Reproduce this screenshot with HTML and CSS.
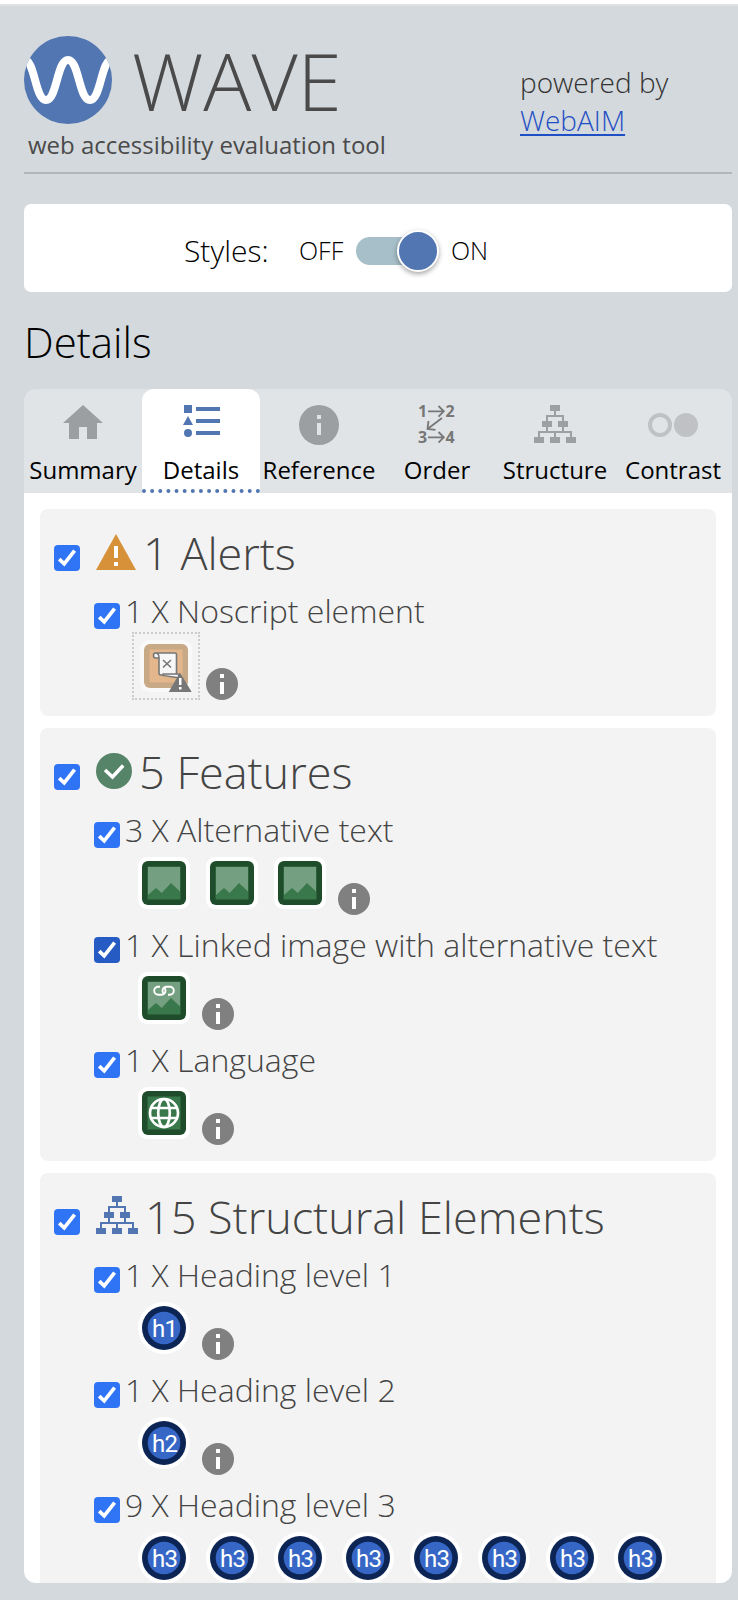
FILE: index.html
```html
<!DOCTYPE html>
<html lang="en">
<head>
<meta charset="utf-8">
<title>WAVE</title>
<link rel="stylesheet" href="styles.css">
</head>
<body>
<svg class="defs" aria-hidden="true">
  <symbol id="tree" viewBox="0 0 42 38"><path d="M16 0h10v6h-4v4h8v6h4v6h-4v4h8v6h4v6H32v-6h4v-4H22v4h4v6H16v-6h4v-4H6v4h4v6H0v-6h4v-6h8v-4H8v-6h4v-6h8V6h-4zM14 12v4h4v6h-4v4h14v-4h-4v-6h4v-4z" fill-rule="evenodd"/></symbol>
  <symbol id="check" viewBox="0 0 26 26"><rect width="26" height="26" rx="4"/><path d="M5.2 14.2l5 4.6L20.6 5.6" fill="none" stroke="#fff" stroke-width="3.7"/></symbol>
  <symbol id="info" viewBox="0 0 32 32"><circle cx="16" cy="16" r="16" fill="#808080"/><path d="M14 6h4v4h-4zM14 14h4v12h-4z" fill="#fff"/></symbol>
  <symbol id="green" viewBox="0 0 52 52"><rect width="52" height="52" rx="9" fill="#fff"/><rect x="4" y="4" width="44" height="44" rx="6" fill="#1f4d2b"/><rect x="9.5" y="9.5" width="33" height="33" fill="#38784a"/></symbol>
  <symbol id="image" viewBox="0 0 52 52"><use href="#green"/><path d="M10 10h32v24.5L33 26l-9.3 10-5.7-5-8 7z" fill="#749f80"/></symbol>
  <symbol id="disc" viewBox="0 0 52 52"><circle cx="26" cy="26" r="26" fill="#fff"/><circle cx="26" cy="26" r="22" fill="#0c2554"/><circle cx="26" cy="26" r="16.3" fill="#3767c6"/></symbol>
</svg>
<div class="frame">
  <header class="header">
    <div class="brand">
      <div class="brand-row">
        <svg class="logo" viewBox="0 0 88 88"><clipPath id="c"><circle cx="44" cy="44" r="44"/></clipPath><g clip-path="url(#c)"><rect width="88" height="88" fill="#5276b1"/><path d="M0 23.500C11 23.500 11 64 22 64S33 24 44 24 55 64 66 64 77 23.500 88 23.500" fill="none" stroke="#fff" stroke-width="8"/></g></svg>
        <span class="wordmark">WAVE</span>
      </div>
      <div class="tagline">web accessibility evaluation tool</div>
    </div>
    <div class="powered">powered by<br><a href="#">WebAIM</a></div>
  </header>
  <div class="styles-bar">
    <span class="styles-label">Styles:</span><span class="off">OFF</span><span class="switch"><span class="knob"></span></span><span class="on">ON</span>
  </div>
  <h1 class="title">Details</h1>
  <nav class="tabs">
    <div class="tab"><svg width="40" height="34" viewBox="0 0 40 34"><path d="M20 0l20 18h-6v16H24V22h-8v12H6V18H0z" fill="#9b9fa2"/></svg><span>Summary</span></div>
    <div class="tab active"><svg width="37" height="32" viewBox="0 0 37 32" fill="#5276b1"><path d="M1 0h8v8H1zM5 11l5 9H0zM13 2h24v4H13zM13 14h24v4H13zM13 26h24v4H13z"/><circle cx="5" cy="28" r="4"/></svg><span>Details</span></div>
    <div class="tab"><svg width="40" height="40" viewBox="0 0 40 40"><circle cx="20" cy="20" r="20" fill="#9b9fa2"/><path d="M18 10h4v4h-4zM18 18h4v12h-4z" fill="#e0e4e7"/></svg><span>Reference</span></div>
    <div class="tab"><svg width="38" height="38" viewBox="0 0 38 38"><g class="order-num"><text x="0" y="11.500">1</text><text x="27.500" y="11.500">2</text><text x="0" y="37.500">3</text><text x="27.500" y="37.500">4</text></g><path d="M10 6.300h16M20.500 1l5.300 5.300-5.300 5.300M10 32.300h16M20.500 27l5.300 5.300-5.300 5.300M24 13L9.500 24M10.500 16L9.500 24l8 .8" fill="none" stroke="#777" stroke-width="1.800"/></svg><span>Order</span></div>
    <div class="tab"><svg width="42" height="38" fill="#9e9fa1"><use href="#tree"/></svg><span>Structure</span></div>
    <div class="tab"><svg width="50" height="40" viewBox="0 0 50 40"><circle cx="12" cy="20" r="10" fill="none" stroke="#bfc1c4" stroke-width="4"/><circle cx="38" cy="20" r="12" fill="#bfc1c4"/></svg><span>Contrast</span></div>
  </nav>
  <main class="panel">
    <section class="card alerts">
      <h2 class="head"><svg class="box"><use href="#check"/></svg><svg class="hicon" width="40" height="36" viewBox="0 0 40 36"><path d="M20 0l20 36H0z" fill="#d69139"/><path d="M18 12h4v12h-4zM18 28h4v4h-4z" fill="#fff"/></svg><span>1 Alerts</span></h2>
      <div class="row">
        <h3 class="label"><svg class="box"><use href="#check"/></svg><span>1 X Noscript element</span></h3>
        <div class="icons"><span class="outlined"><svg class="tile" viewBox="0 0 52 52"><rect width="52" height="52" rx="9" fill="#f9f9f9"/><rect x="4" y="4" width="44" height="44" rx="6" fill="#c8a985"/><rect x="9.500" y="9.500" width="33" height="33" fill="#e3b68b"/><path d="M14.500 13H35q1.500 0 1.500 1.500V34q0 1.200-1.500 1.200L21 35q-2 0-2-2V18h-3.500q-2 0-2-2.500T15.500 13q3.500 0 3.500 5" fill="#f7f7f7" stroke="#777" stroke-width="1.600"/><path d="M23 34h15l2 4-17-2.500z" fill="#f7f7f7" stroke="#777" stroke-width="1.400"/><path d="M23 20l8 7.500M31 20l-8 7.500" stroke="#777" stroke-width="1.600"/><path d="M40 32.500L51.700 52h-23z" fill="#777"/><path d="M39 38h2.500v7H39zM39 47h2.500v2.500H39z" fill="#fff"/></svg></span><svg class="info"><use href="#info"/></svg></div>
      </div>
    </section>
    <section class="card">
      <h2 class="head"><svg class="box"><use href="#check"/></svg><svg class="hicon" width="36" height="36" viewBox="0 0 36 36"><circle cx="18" cy="18" r="18" fill="#558468"/><path d="M9 17l7.500 7L27.200 12.500" fill="none" stroke="#fff" stroke-width="3.500"/></svg><span>5 Features</span></h2>
      <div class="row">
        <h3 class="label"><svg class="box"><use href="#check"/></svg><span>3 X Alternative text</span></h3>
        <div class="icons"><svg class="tile"><use href="#image"/></svg><svg class="tile"><use href="#image"/></svg><svg class="tile"><use href="#image"/></svg><svg class="info"><use href="#info"/></svg></div>
      </div>
      <div class="row">
        <h3 class="label"><svg class="box hover"><use href="#check"/></svg><span>1 X Linked image with alternative text</span></h3>
        <div class="icons"><svg class="tile" viewBox="0 0 52 52"><use href="#image"/><g fill="none" stroke="#fff" stroke-width="1.900"><path d="M22 14.800h-1.800a4 4 0 0 0 0 8h3.300a4 4 0 0 0 4-4q0-2-1.500-3.200M30 22.800h1.800a4 4 0 0 0 0-8h-3.300a4 4 0 0 0-4 4q0 2 1.500 3.200"/></g></svg><svg class="info"><use href="#info"/></svg></div>
      </div>
      <div class="row">
        <h3 class="label"><svg class="box"><use href="#check"/></svg><span>1 X Language</span></h3>
        <div class="icons"><svg class="tile" viewBox="0 0 52 52"><use href="#green"/><g fill="none" stroke="#fff" stroke-width="2.700"><circle cx="26" cy="26" r="14"/><ellipse cx="26" cy="26" rx="5.800" ry="14"/><path d="M14 21h24M14 31h24"/></g></svg><svg class="info"><use href="#info"/></svg></div>
      </div>
    </section>
    <section class="card">
      <h2 class="head"><svg class="box"><use href="#check"/></svg><svg class="hicon tree" width="42" height="38" fill="#5276b1"><use href="#tree"/></svg><span>15 Structural Elements</span></h2>
      <div class="row">
        <h3 class="label"><svg class="box"><use href="#check"/></svg><span>1 X Heading level 1</span></h3>
        <div class="icons"><svg class="tile"><use href="#disc"/><text x="14" y="35">h1</text></svg><svg class="info"><use href="#info"/></svg></div>
      </div>
      <div class="row">
        <h3 class="label"><svg class="box"><use href="#check"/></svg><span>1 X Heading level 2</span></h3>
        <div class="icons"><svg class="tile"><use href="#disc"/><text x="14" y="35">h2</text></svg><svg class="info"><use href="#info"/></svg></div>
      </div>
      <div class="row">
        <h3 class="label"><svg class="box"><use href="#check"/></svg><span>9 X Heading level 3</span></h3>
        <div class="icons"><svg class="tile"><use href="#disc"/><text x="14" y="35">h3</text></svg><svg class="tile"><use href="#disc"/><text x="14" y="35">h3</text></svg><svg class="tile"><use href="#disc"/><text x="14" y="35">h3</text></svg><svg class="tile"><use href="#disc"/><text x="14" y="35">h3</text></svg><svg class="tile"><use href="#disc"/><text x="14" y="35">h3</text></svg><svg class="tile"><use href="#disc"/><text x="14" y="35">h3</text></svg><svg class="tile"><use href="#disc"/><text x="14" y="35">h3</text></svg><svg class="tile"><use href="#disc"/><text x="14" y="35">h3</text></svg></div>
      </div>
    </section>
  </main>
</div>
</body>
</html>
```
FILE: styles.css
```css
* { box-sizing: border-box; }
html, body { height: 1600px; overflow: hidden; }
body { margin: 0; background: #d4d9dd; font-family: "Open Sans", "Noto Sans", sans-serif; font-weight: 300; color: #444; }
svg { display: block; flex: none; }
.defs { width: 0; height: 0; position: absolute; }
.frame { height: 1600px; border-top: 4px solid #fff; padding: 0 6px 17px 24px; box-shadow: inset 0 2px #e0e1e2; display: flex; flex-direction: column; }

.header { height: 170px; flex: none; padding-top: 32px; border-bottom: 2px solid #b1b6ba; display: flex; justify-content: space-between; }
.brand-row { display: flex; height: 88px; }
.logo { width: 88px; height: 88px; }
.wordmark { font-size: 80px; line-height: 88px; margin-left: 20px; color: #4a4a4a; white-space: nowrap; }
.tagline { margin: 3px 0 0 4px; font-size: 24px; line-height: 36px; font-weight: 400; color: #4a4a4a; white-space: nowrap; }
.powered { width: 213px; padding-top: 27px; margin-right: -1px; font-size: 28px; line-height: 38px; color: #333; }
.powered a { color: #1f4fc4; text-underline-offset: 3px; text-decoration-thickness: 2px; }

.styles-bar { flex: none; margin-top: 30px; height: 88px; border-radius: 7px; background: #fff; color: #000; display: flex; align-items: center; padding: 4px 0 0 160px; white-space: nowrap; }
.styles-label { width: 115px; font-size: 30px; }
.off { width: 57px; font-size: 25px; }
.on { font-size: 25px; margin-left: 15px; }
.switch { width: 80px; height: 28px; margin-top: 2px; border-radius: 14px; background: #a7bfc8; display: flex; align-items: center; justify-content: flex-end; }
.knob { width: 42px; height: 42px; margin-right: -3px; border-radius: 50%; background: #5276b1; border: 2px solid #fff; box-shadow: 0 2px 5px rgba(0,0,0,.35); }
.title { margin: 18px 0 0; height: 79px; flex: none; font-size: 42px; line-height: 64px; font-weight: 300; color: #000; }

.tabs { height: 104px; flex: none; display: grid; grid-template-columns: repeat(6, 1fr); background: #e0e4e7; border-radius: 12px 12px 0 0; }
.tab { display: flex; flex-direction: column; align-items: center; padding-top: 16px; color: #000; font-weight: 400; font-size: 24px; white-space: nowrap; }
.tab svg { margin-bottom: auto; }
.tab span { line-height: 32px; margin-bottom: 7px; }
.active { background: #fff; border-radius: 12px 12px 0 0; border-bottom: 4px dotted #5276b1; }
.active span { margin-bottom: 3px; }
.order-num text { font: 700 16px "Open Sans", sans-serif; fill: #777; }

.panel { flex: 1; min-height: 0; overflow: hidden; background: #fff; border-radius: 0 0 12px 12px; padding: 16px 16px 0; }
.card { background: #f3f3f3; border-radius: 8px; margin-bottom: 12px; padding-bottom: 7px; }
.alerts { height: 207px; padding-bottom: 0; }
.box { width: 26px; height: 26px; fill: #3074f6; }
.box.hover { fill: #255bc2; }
.head { margin: 0; height: 81px; padding-left: 14px; display: flex; font-size: 45px; line-height: 88px; font-weight: 300; white-space: nowrap; }
.head .box { margin: 36px 16px 0 0; }
.head .hicon { margin: 25px 7px 0 0; }
.head .tree { margin-top: 23px; }
.row { height: 115px; }
.label { margin: 0; height: 42px; padding-left: 54px; display: flex; font-size: 32px; line-height: 30px; font-weight: 300; white-space: nowrap; }
.label .box { margin: 13px 5px 0 0; }
.label span { padding-top: 6px; }
.icons { display: flex; padding-left: 90px; }
.tile { width: 52px; height: 52px; margin: 6px 8px 0; }
.tile text { font: 400 24px Roboto, sans-serif; fill: #fff; letter-spacing: -0.8px; }
.info { width: 32px; height: 32px; margin: 32px 0 0 4px; }
.outlined { width: 68px; height: 68px; margin-left: 2px; border: 2px dotted #ccc; }
.outlined .tile { margin: 6px; }
.outlined + .info { margin: 36px 0 0 6px; }
```
